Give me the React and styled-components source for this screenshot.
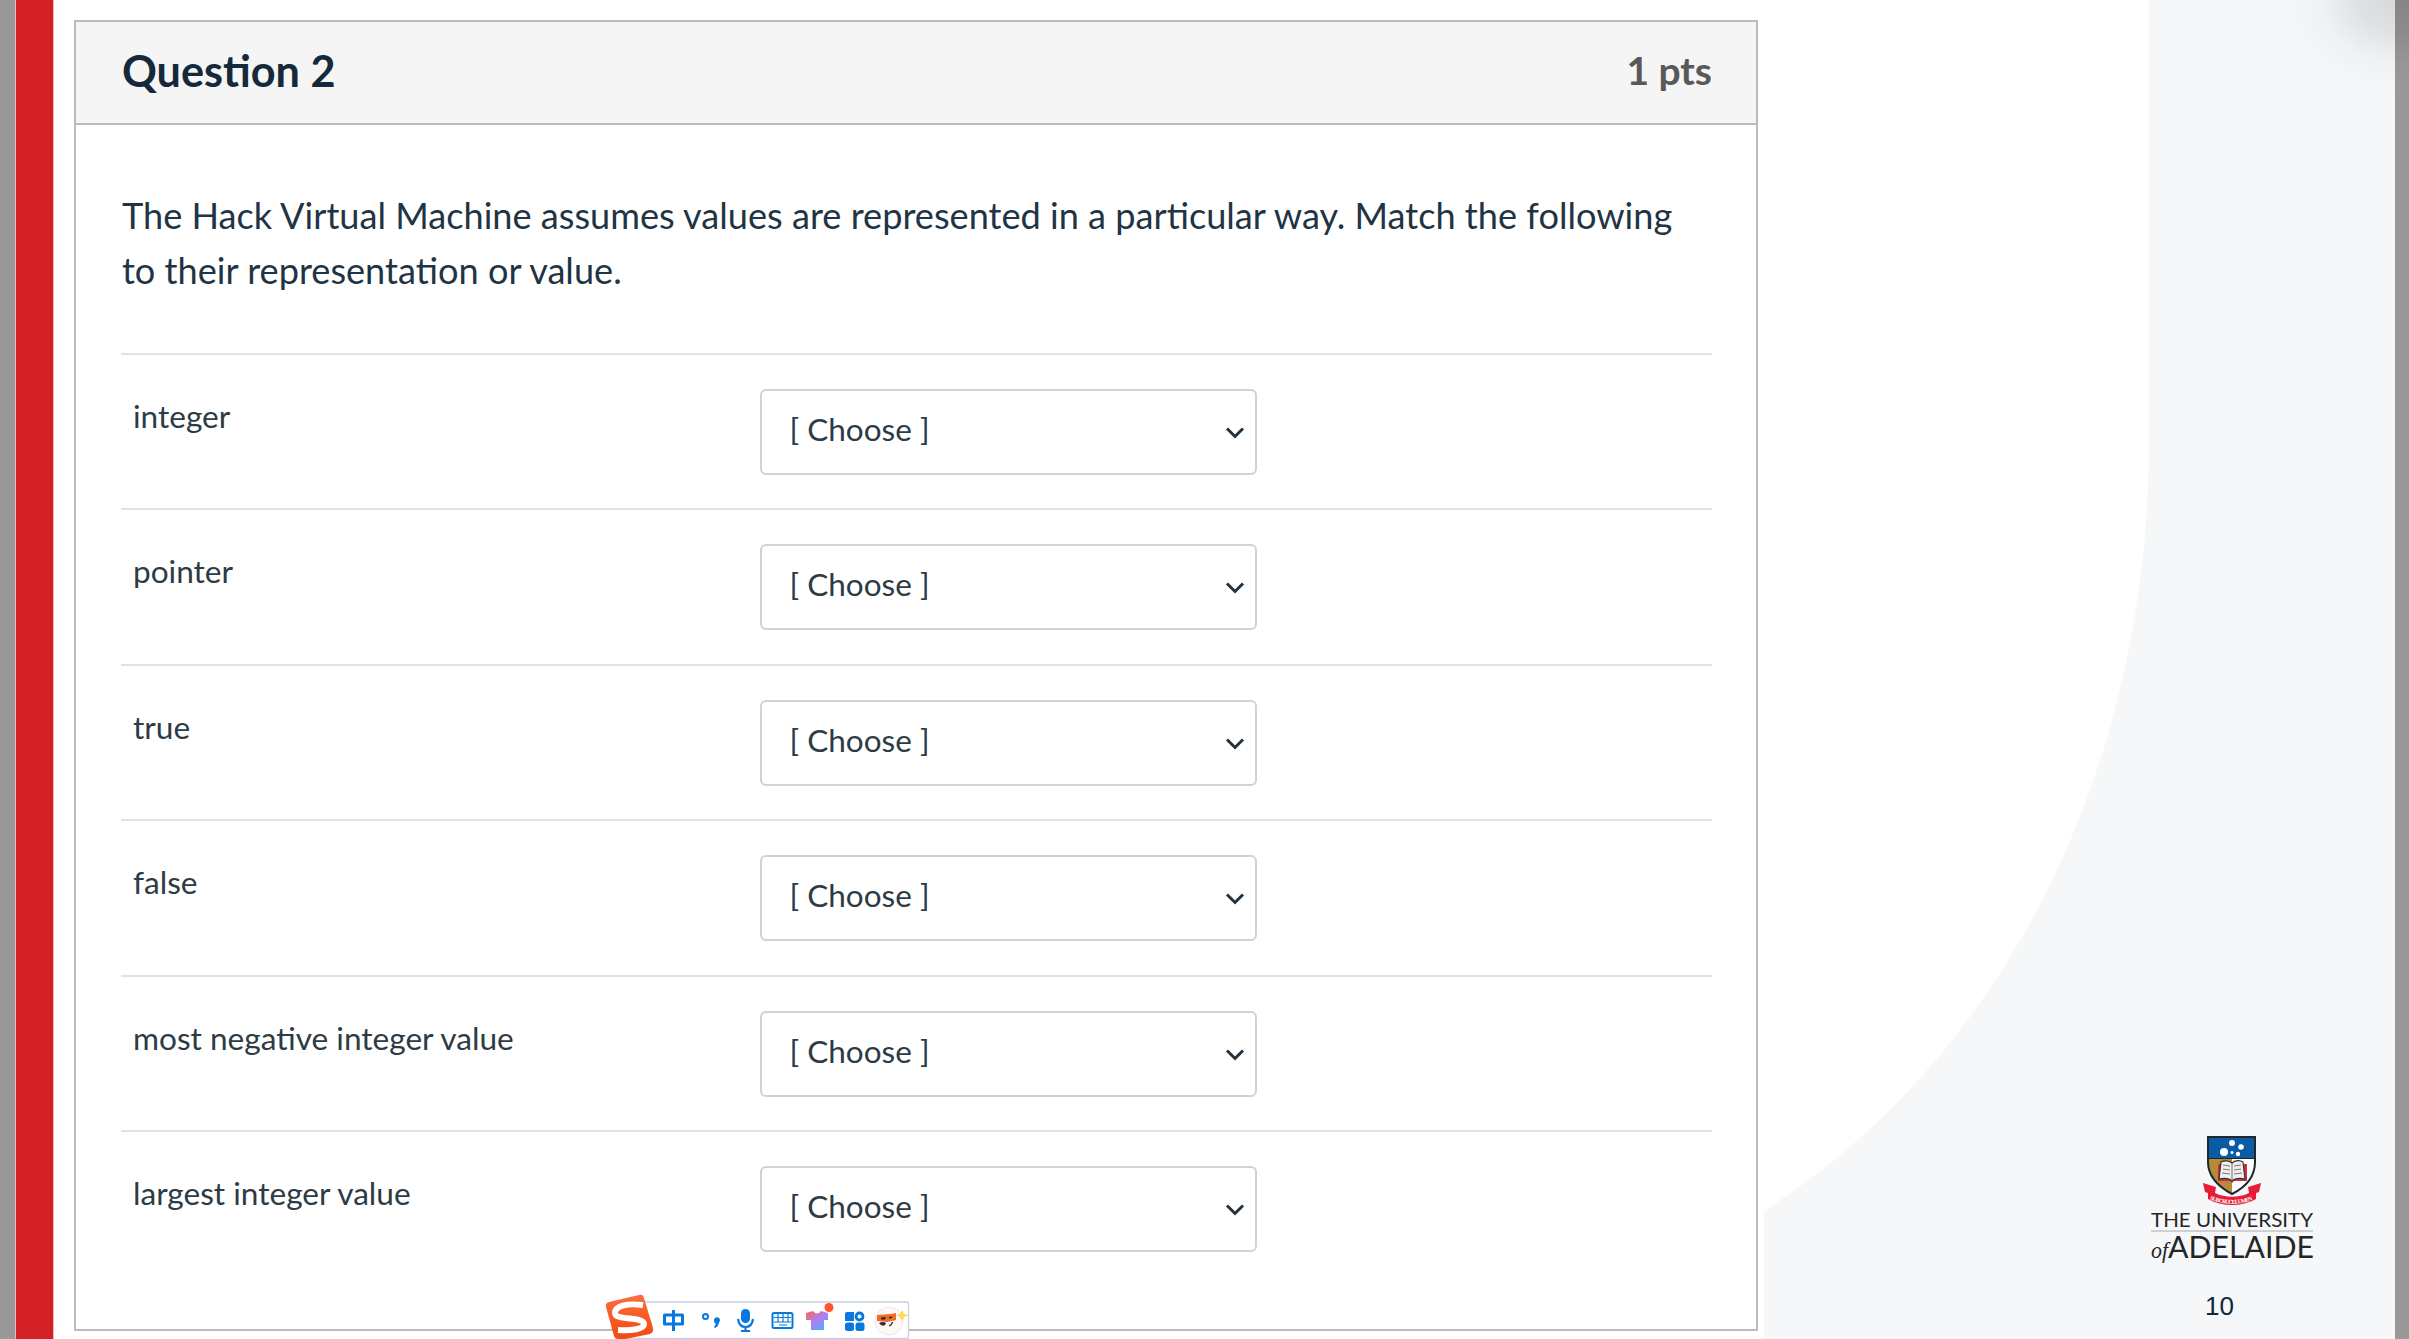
import React from "react";
import styled, { createGlobalStyle } from "styled-components";

const Global = createGlobalStyle`
  *, *::before, *::after { box-sizing: border-box; }
  body { margin: 0; overflow: hidden; background: #fff; font-family: Lato, "Liberation Sans", sans-serif; color: #2d3b45; }
`;

const Page = styled.div`
  position: relative;
  display: flex;
  width: 2409px;
  height: 1339px;
  overflow: hidden;
  background: #fff;
`;
const Gutter = styled.div`
  flex: none;
  width: ${(p) => p.$w}px;
  background: #999;
`;
const RedBar = styled.div`
  flex: none;
  width: 39px;
  background: #d32027;
  border-left: 1px solid #e5bcbd;
  border-right: 1px solid #f0b8ba;
`;
const Slide = styled.main`
  flex: none;
  width: 1710px;
  padding: 20px 0 0 20px;
`;
const Card = styled.section`
  width: 1684px;
  height: 1311px;
  border: 2px solid #bbb;
  background: #fff;
`;
const CardHeader = styled.header`
  display: flex;
  justify-content: space-between;
  height: 103px;
  padding: 24px 44px 0 46px;
  background: #f5f5f5;
  border-bottom: 2px solid #bbb;
`;
const Title = styled.h1`
  margin: 0;
  font-size: 43.2px;
  font-weight: 700;
  line-height: 48px;
  color: #15293a;
`;
const Points = styled.span`
  font-size: 39px;
  font-weight: 700;
  line-height: 48px;
  color: #595959;
`;
const Prompt = styled.p`
  margin: 0;
  padding: 63px 0 0 46px;
  height: 228px;
  font-size: 36.15px;
  line-height: 55px;
  white-space: pre;
  color: #1f3444;
`;
const Row = styled.div`
  display: flex;
  align-items: flex-start;
  height: 155.4px;
  margin: 0 44px 0 45px;
  padding: 34px 0 0 12px;
  border-top: 2px solid #e2e2e2;
`;
const Label = styled.span`
  width: 626.5px;
  padding-top: 7px;
  font-size: 31.6px;
  line-height: 40px;
  color: #2d3b45;
`;
const Select = styled.div`
  display: flex;
  align-items: center;
  justify-content: space-between;
  width: 497px;
  height: 86px;
  padding: 0 10px 6px 28px;
  border: 2px solid #d2d2d2;
  border-radius: 6px;
  font-size: 31.5px;
  color: #2d3b45;
  svg { position: relative; top: 4px; }
`;
const Side = styled.aside`
  position: relative;
  flex: none;
  width: 631px;
`;
const Curve = styled.svg`
  display: block;
`;
const Shade = styled.div`
  position: absolute;
  top: 0;
  right: -14px;
  width: 126px;
  height: 100px;
  background: radial-gradient(ellipse 115px 92px at 92% 0, rgba(0,0,0,.13), rgba(0,0,0,.09) 35%, rgba(0,0,0,.025) 68%, transparent);
`;
const Brand = styled.div`
  position: absolute;
  left: 386px;
  top: 1134px;
`;
const PageNumber = styled.div`
  position: absolute;
  left: 441px;
  top: 1290px;
  font: 26px/32px "Liberation Sans", sans-serif;
  color: #12263a;
`;
const Ime = styled.div`
  position: absolute;
  left: 605px;
  top: 1294px;
`;

const rows = ["integer", "pointer", "true", "false", "most negative integer value", "largest integer value"];

const Chevron = () => (
  <svg width="20" height="14" viewBox="0 0 20 14" fill="none">
    <path d="M2 2.5 10 10.500 18 2.500" stroke="#22333f" strokeWidth="3" />
  </svg>
);

const Crest = () => (
  <svg width="170" height="144" viewBox="0 0 170 144">
    <clipPath id="shield"><path d="M58 3H105V28C105 43 96 53 82 60C67 52 58 42 58 28Z" /></clipPath>
    <g clipPath="url(#shield)">
      <rect x="56" y="0" width="52" height="25" fill="#0a5ba5" />
      <rect x="56" y="24" width="26" height="40" fill="#b58a38" />
      <rect x="82" y="24" width="26" height="40" fill="#fff" />
      <path d="M56 24.500H108" stroke="#222" strokeWidth="1" />
    </g>
    <path d="M58 3H105V28C105 43 96 53 82 60C67 52 58 42 58 28Z" fill="none" stroke="#1d2730" strokeWidth="2" />
    <g fill="#fff"><circle cx="82" cy="9" r="3" /><circle cx="91" cy="13" r="2.800" /><circle cx="74" cy="18" r="4" /><circle cx="82" cy="18.500" r="1.500" /><circle cx="88" cy="20" r="2.200" /></g>
    <path d="M68 30V47H80L82 49 84 47H97V30" fill="#d9293f" />
    <path d="M71 28C75 26 80 27 82 29C85 26 90 26 93 28L95 45C90 44 85 44 82 47C79 44 74 44 69 45Z" fill="#eee" stroke="#333" strokeWidth="1.200" />
    <path d="M82 29V47M73 31 80 32M73 35 80 36M72 39 80 40M84 32 91 31M84 36 91 35M84 40 92 39" stroke="#777" strokeWidth="1" fill="none" />
    <path d="M53 49 66 53 65 59C75 64 89 64 99 59L98 53 111 49 109 58 106 59 106 65C92 73 72 73 58 65L58 59 55 58Z" fill="#e71d36" />
    <path id="motto" d="M59 65C73 71.500 91 71.500 105 65" fill="none" />
    <text fontFamily="Liberation Serif" fontWeight="700" fontSize="6" fill="#fff"><textPath href="#motto" textLength="44" startOffset="1">SUB CRUCE LUMEN</textPath></text>
    <g fill="#252525">
      <text x="1" y="93" fontFamily="Lato" fontSize="19.500" textLength="162" lengthAdjust="spacingAndGlyphs">THE UNIVERSITY</text>
      <text x="1" y="123.500" fontFamily="Liberation Serif" fontStyle="italic" fontSize="23" textLength="17" lengthAdjust="spacingAndGlyphs">of</text>
      <text x="18" y="123.500" fontFamily="Lato" fontSize="30" textLength="146" lengthAdjust="spacingAndGlyphs">ADELAIDE</text>
    </g>
    <path d="M1 97H163" stroke="#aaa" strokeWidth="1" />
  </svg>
);

const ImeBar = () => (
  <svg width="308" height="45" viewBox="0 0 308 45">
    <defs>
      <linearGradient id="shirt" x1="0" y1="0" x2=".7" y2="1"><stop stopColor="#ff6939" /><stop offset=".5" stopColor="#b979ed" /><stop offset="1" stopColor="#58a9ff" /></linearGradient>
      <linearGradient id="sogou" x1="0" y1="0" x2="0" y2="1"><stop stopColor="#ff6c3d" /><stop offset="1" stopColor="#f04b10" /></linearGradient>
    </defs>
    <rect x="20" y="8" width="283.500" height="36.500" rx="2" fill="#fff" stroke="#c5d2e4" strokeWidth="1.300" />
    <path d="M4 8 34 1Q38 0 39 4L48 34Q49 38 45 40L20 45H13Q10 45 9 42L1 13Q0 9 4 8Z" fill="url(#sogou)" />
    <path d="M38 11C21 9 10 12 10 19C10 27 39 22 39 30C39 35 27 37 13 36" fill="none" stroke="#fff" strokeWidth="6" />
    <g fill="none" stroke="#0878dc" strokeWidth="3">
      <path d="M59.500 21H77.500V30H59.500ZM68.500 16V37" strokeLinejoin="round" />
      <circle cx="100.500" cy="22.500" r="2.500" strokeWidth="2" />
      <path d="M133 25Q134 33 140.500 33T148 25M140.500 34V37M136 37H145" strokeWidth="2.200" />
      <rect x="167.500" y="19" width="20" height="15" rx="1.500" strokeWidth="2" />
      <path d="M169 23.500H186M169 28H186M174 31H182M173 20V28M178 20V28M183 20V28" strokeWidth="1.200" />
    </g>
    <path d="M109 26.500a3 3 0 1 1 5 2Q113 33 110 34L109 33 111 30Q109 29 109 26.500Z" fill="#0878dc" />
    <rect x="136" y="15" width="9" height="14" rx="4.500" fill="#0878dc" />
    <path d="M201 19 208 17Q212 22 216 17L223 19V26H219V36H206V26H201Z" fill="url(#shirt)" />
    <circle cx="224" cy="13.500" r="4.500" fill="#ff5531" />
    <g fill="#0878dc"><path d="M242 18H249V27H240V20Q240 18 242 18Z" /><circle cx="254.500" cy="22.500" r="3.500" fill="none" stroke="#0878dc" strokeWidth="2.800" /><rect x="240" y="28.500" width="9" height="8.500" rx="2.500" /><rect x="250.500" y="28.500" width="9" height="8.500" rx="2.500" /></g>
    <circle cx="284" cy="27" r="14" fill="#fdf8f7" stroke="#eee5e7" />
    <path d="M272 21 286 20 291 19V26L282 28 272 27Z" fill="#ef6c24" />
    <path d="M276 23.500 281 23 280 25.500 276 25.500ZM284 23 287.500 22.500 287 24 284 24.500Z" fill="#35262a" />
    <path d="M274 29Q278 27 281 29Q280 33 276 31Z" fill="#35262a" />
    <path d="M284 32Q287 31 287.500 28" stroke="#35262a" strokeWidth="1.300" fill="none" />
    <path d="M297 16 299 20 303 21 299 23 297 27 295 23 291 21 295 20Z" fill="#ffd849" />
  </svg>
);

export default function App() {
  return (
    <>
      <Global />
      <Page>
        <Gutter $w={15} />
        <RedBar />
        <Slide>
          <Card>
            <CardHeader><Title>Question 2</Title><Points>1 pts</Points></CardHeader>
            <Prompt>{"The Hack Virtual Machine assumes values are represented in a particular way. Match the following\nto their representation or value."}</Prompt>
            {rows.map((label) => (
              <Row key={label}>
                <Label>{label}</Label>
                <Select>[ Choose ]<Chevron /></Select>
              </Row>
            ))}
          </Card>
        </Slide>
        <Side>
          <Curve width="631" height="1339" viewBox="1764 0 631 1339">
            <path d="M2149 0V440C2149 775 2000 1060 1764 1211V1339H2395V0Z" fill="#f5f7f9" />
          </Curve>
          <Shade />
          <Brand><Crest /></Brand>
          <PageNumber>10</PageNumber>
        </Side>
        <Gutter $w={14} />
        <Ime><ImeBar /></Ime>
      </Page>
    </>
  );
}
